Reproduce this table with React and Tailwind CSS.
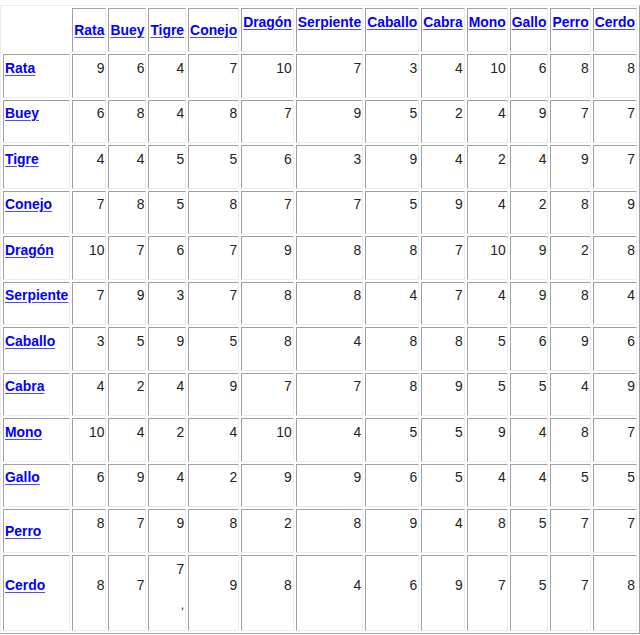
import React from 'react';

const SIGNS = ['Rata', 'Buey', 'Tigre', 'Conejo', 'Dragón', 'Serpiente', 'Caballo', 'Cabra', 'Mono', 'Gallo', 'Perro', 'Cerdo'];

const SCORES = [
  [9, 6, 4, 7, 10, 7, 3, 4, 10, 6, 8, 8],
  [6, 8, 4, 8, 7, 9, 5, 2, 4, 9, 7, 7],
  [4, 4, 5, 5, 6, 3, 9, 4, 2, 4, 9, 7],
  [7, 8, 5, 8, 7, 7, 5, 9, 4, 2, 8, 9],
  [10, 7, 6, 7, 9, 8, 8, 7, 10, 9, 2, 8],
  [7, 9, 3, 7, 8, 8, 4, 7, 4, 9, 8, 4],
  [3, 5, 9, 5, 8, 4, 8, 8, 5, 6, 9, 6],
  [4, 2, 4, 9, 7, 7, 8, 9, 5, 5, 4, 9],
  [10, 4, 2, 4, 10, 4, 5, 5, 9, 4, 8, 7],
  [6, 9, 4, 2, 9, 9, 6, 5, 4, 4, 5, 5],
  [8, 7, 9, 8, 2, 8, 9, 4, 8, 5, 7, 7],
  [8, 7, 7, 9, 8, 4, 6, 9, 7, 5, 7, 8],
];

// inset cell border: dark top/left, light bottom/right
const cell = 'p-[1px] border border-t-[#a0a0a0] border-l-[#a0a0a0] border-r-[#ededed] border-b-[#ededed] align-middle';

function Sign({ name }) {
  return (
    <a href="#" className="font-bold text-[#0000ff] underline decoration-[#4d4dff] underline-offset-[2px]">
      {name}
    </a>
  );
}

function Blank() {
  return (
    <>
      <br />
      {'\u00a0'}
    </>
  );
}

export default function App() {
  return (
    <div className="bg-white pt-[5px] font-['Liberation_Sans',Arial,sans-serif] text-[13.9px] leading-[16px] text-[#222]">
      <table className="border-separate border-spacing-[2px] border border-t-[#ededed] border-l-[#ededed] border-r-[#a0a0a0] border-b-[#a0a0a0]">
        <thead>
          <tr>
            <th className="p-[1px] h-[44px]"></th>
            {SIGNS.map((s, i) => (
              <th key={s} className={`${cell} h-[44px] text-left font-normal`}>
                <Sign name={s} />
                {i >= 4 && <Blank />}
              </th>
            ))}
          </tr>
        </thead>
        <tbody>
          {SIGNS.map((s, r) => {
            const last = r === SIGNS.length - 1;
            const h = last ? 'h-[76px]' : 'h-[43.5px]';
            return (
              <tr key={s}>
                <td className={`${cell} ${h} text-left`}>
                  <Sign name={s} />
                  {s !== 'Perro' && <Blank />}
                </td>
                {SCORES[r].map((n, c) =>
                  last && c === 2 ? (
                    <td key={c} className={`${cell} ${h} text-right !align-top`}>
                      <div className="pt-[4px]">{n}</div>
                      <div className="mt-[21px] text-[12px] leading-[14px]">,</div>
                    </td>
                  ) : (
                    <td key={c} className={`${cell} ${h} text-right`}>
                      {n}
                      <Blank />
                    </td>
                  )
                )}
              </tr>
            );
          })}
        </tbody>
      </table>
    </div>
  );
}
